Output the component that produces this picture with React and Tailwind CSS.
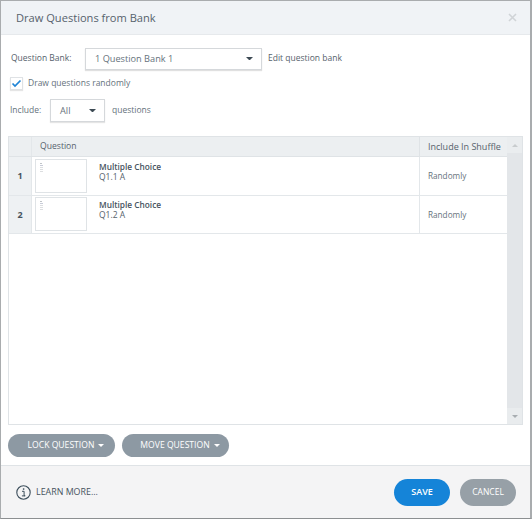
import React from "react";

function Caret({ className, w = 8 }) {
  return (
    <svg width={w} height={w / 2} viewBox="0 0 8 4" className={className}>
      <path d="M0 0H8L4 4Z" fill="currentColor" />
    </svg>
  );
}

function Row({ n, q }) {
  return (
    <div className="flex h-[38.5px] border-b border-[#e3e7ea] shrink-0">
      <div className="w-[23px] shrink-0 bg-[#eef1f3] border-r border-[#e3e7ea] flex items-center justify-center text-[9px] font-bold text-[#46535e]">
        {n}
      </div>
      <div className="flex-1 flex pl-[3px] pt-[1.5px] border-r border-[#e3e7ea]">
        <div className="w-[52px] h-[34px] border border-[#dfe3e6] bg-white flex flex-col gap-[1px] pl-[4px] pt-[3px] shrink-0">
          <div className="w-[2px] h-[1px] bg-[#c0c4c8]" />
          <div className="w-[3px] h-[1px] bg-[#c8ccd8]" />
          <div className="w-[3px] h-[1px] bg-[#dcdee0]" />
          <div className="w-[3px] h-[1px] bg-[#dcdee0]" />
          <div className="w-[3px] h-[1px] bg-[#dcdee0]" />
        </div>
        <div className="pl-[12px] pt-[3px] text-[8.5px] leading-[10px] text-[#56626c]">
          <div className="font-semibold text-[8.3px] text-[#46535e]">Multiple Choice</div>
          <div>{q}</div>
        </div>
      </div>
      <div className="w-[87px] shrink-0 flex items-center pl-[8px] pt-[1px] text-[8.2px] text-[#66727c]">Randomly</div>
    </div>
  );
}

export default function App() {
  return (
    <div className="w-[532px] h-[522px] bg-white">
      <div className="w-[532px] h-[519px] flex flex-col border border-[#a9acae] border-r-2 border-b-[#8c8f91] font-['Open_Sans',sans-serif] overflow-hidden">
        <div className="h-[34px] shrink-0 bg-[#f0f3f6] border-b border-[#e6e9ec] flex items-center justify-between pl-[15px] pr-[13px]">
          <span className="text-[11.1px] text-[#56626c] pt-[1px]">Draw Questions from Bank</span>
          <svg width="9" height="9" viewBox="0 0 9 9">
            <path d="M1 1L8 8M8 1L1 8" stroke="#d0d4d7" strokeWidth="1.6" />
          </svg>
        </div>

        <div className="flex-1 min-h-0 flex flex-col pl-[7px] pr-[7px]">
          <div className="flex items-center h-[23px] mt-[12px] pl-[3px] text-[8.5px] text-[#56626c]">
            <span className="w-[74px]">Question Bank:</span>
            <div className="w-[177px] h-[22px] border border-[#d5d8db] shadow-[0_1px_1px_rgba(0,0,0,0.12)] flex items-center justify-between pl-[9px] pr-[8px] text-[9.2px] text-[#66727c]">
              <span>1 Question Bank 1</span>
              <Caret w={7} className="text-[#3d4a54]" />
            </div>
            <span className="ml-[6px]">Edit question bank</span>
          </div>

          <div className="flex items-center mt-[6px] h-[14px] pl-[2px] text-[8.5px] text-[#66727c]">
            <div className="w-[13px] h-[13px] border border-[#dfe2e5] shadow-[0_1px_1px_rgba(0,0,0,0.1)] flex items-center justify-center">
              <svg width="11" height="9" viewBox="0 0 11 9">
                <path d="M1.5 4.5L4 7L9.5 1.5" stroke="#1f84d6" strokeWidth="1.7" fill="none" />
              </svg>
            </div>
            <span className="ml-[5px]">Draw questions randomly</span>
          </div>

          <div className="flex items-center mt-[9px] h-[23px] pl-[2px] text-[8.5px] text-[#66727c]">
            <span className="w-[40px]">Include:</span>
            <div className="w-[55px] h-[23px] border border-[#d5d8db] shadow-[0_1px_1px_rgba(0,0,0,0.1)] flex items-center justify-between pl-[9px] pr-[8px] text-[9.2px]">
              <span>All</span>
              <Caret w={7} className="text-[#3d4a54]" />
            </div>
            <span className="ml-[7px]">questions</span>
          </div>

          <div className="mt-[14px] h-[289px] shrink-0 flex border border-[#dfe3e6]">
            <div className="flex-1 flex flex-col min-w-0">
              <div className="h-[20px] shrink-0 flex bg-[#eceff1] border-b border-[#dfe3e6] text-[8.6px] text-[#56626c]">
                <div className="w-[23px] shrink-0 border-r border-[#e3e7ea]" />
                <div className="flex-1 flex items-center pl-[8px] border-r border-[#dfe3e6]">Question</div>
                <div className="w-[87px] shrink-0 flex items-center pl-[8px] text-[9px]">Include In Shuffle</div>
              </div>
              <Row n="1" q="Q1.1 A" />
              <Row n="2" q="Q1.2 A" />
            </div>
            <div className="w-[15px] shrink-0 bg-[#e3e6e9] flex flex-col justify-between">
              <div className="h-[16px] bg-[#eaedef] flex items-center justify-center">
                <Caret w={6} className="text-[#c8ccce] rotate-180" />
              </div>
              <div className="h-[16px] bg-[#e9ecee] flex items-center justify-center">
                <Caret w={6} className="text-[#a8adb1]" />
              </div>
            </div>
          </div>

          <div className="flex gap-[7px] mt-[9px]">
            <button className="w-[107px] h-[23px] rounded-full bg-[#8d99a3] text-white text-[8.6px] flex items-center justify-center gap-[4px] pl-[9px]">
              LOCK QUESTION <Caret w={6} />
            </button>
            <button className="w-[107px] h-[23px] rounded-full bg-[#8d99a3] text-white text-[8.6px] flex items-center justify-center gap-[4px] pl-[9px]">
              MOVE QUESTION <Caret w={6} />
            </button>
          </div>
        </div>

        <div className="h-[53px] shrink-0 bg-[#f4f4f5] border-t border-[#dfe3e6] flex items-center justify-between pl-[15px] pr-[14px]">
          <div className="flex items-center gap-[5px] text-[8.9px] text-[#46535e]">
            <svg width="15" height="15" viewBox="0 0 15 15">
              <circle cx="7.5" cy="7.5" r="6.7" fill="none" stroke="#3d4f5c" strokeWidth="1.1" />
              <rect x="6.9" y="3.3" width="1.4" height="1.5" fill="#3d4f5c" />
              <path d="M6 6.3H8.1V10.7H9.2M5.9 10.9H9.2" stroke="#3d4f5c" strokeWidth="1" fill="none" />
            </svg>
            LEARN MORE...
          </div>
          <div className="flex gap-[10px]">
            <button className="w-[56px] h-[27px] rounded-full bg-[#1584d8] text-white text-[9px] font-semibold">SAVE</button>
            <button className="w-[56px] h-[27px] rounded-full bg-[#97a0a7] text-white text-[8.5px]">CANCEL</button>
          </div>
        </div>
      </div>
    </div>
  );
}
